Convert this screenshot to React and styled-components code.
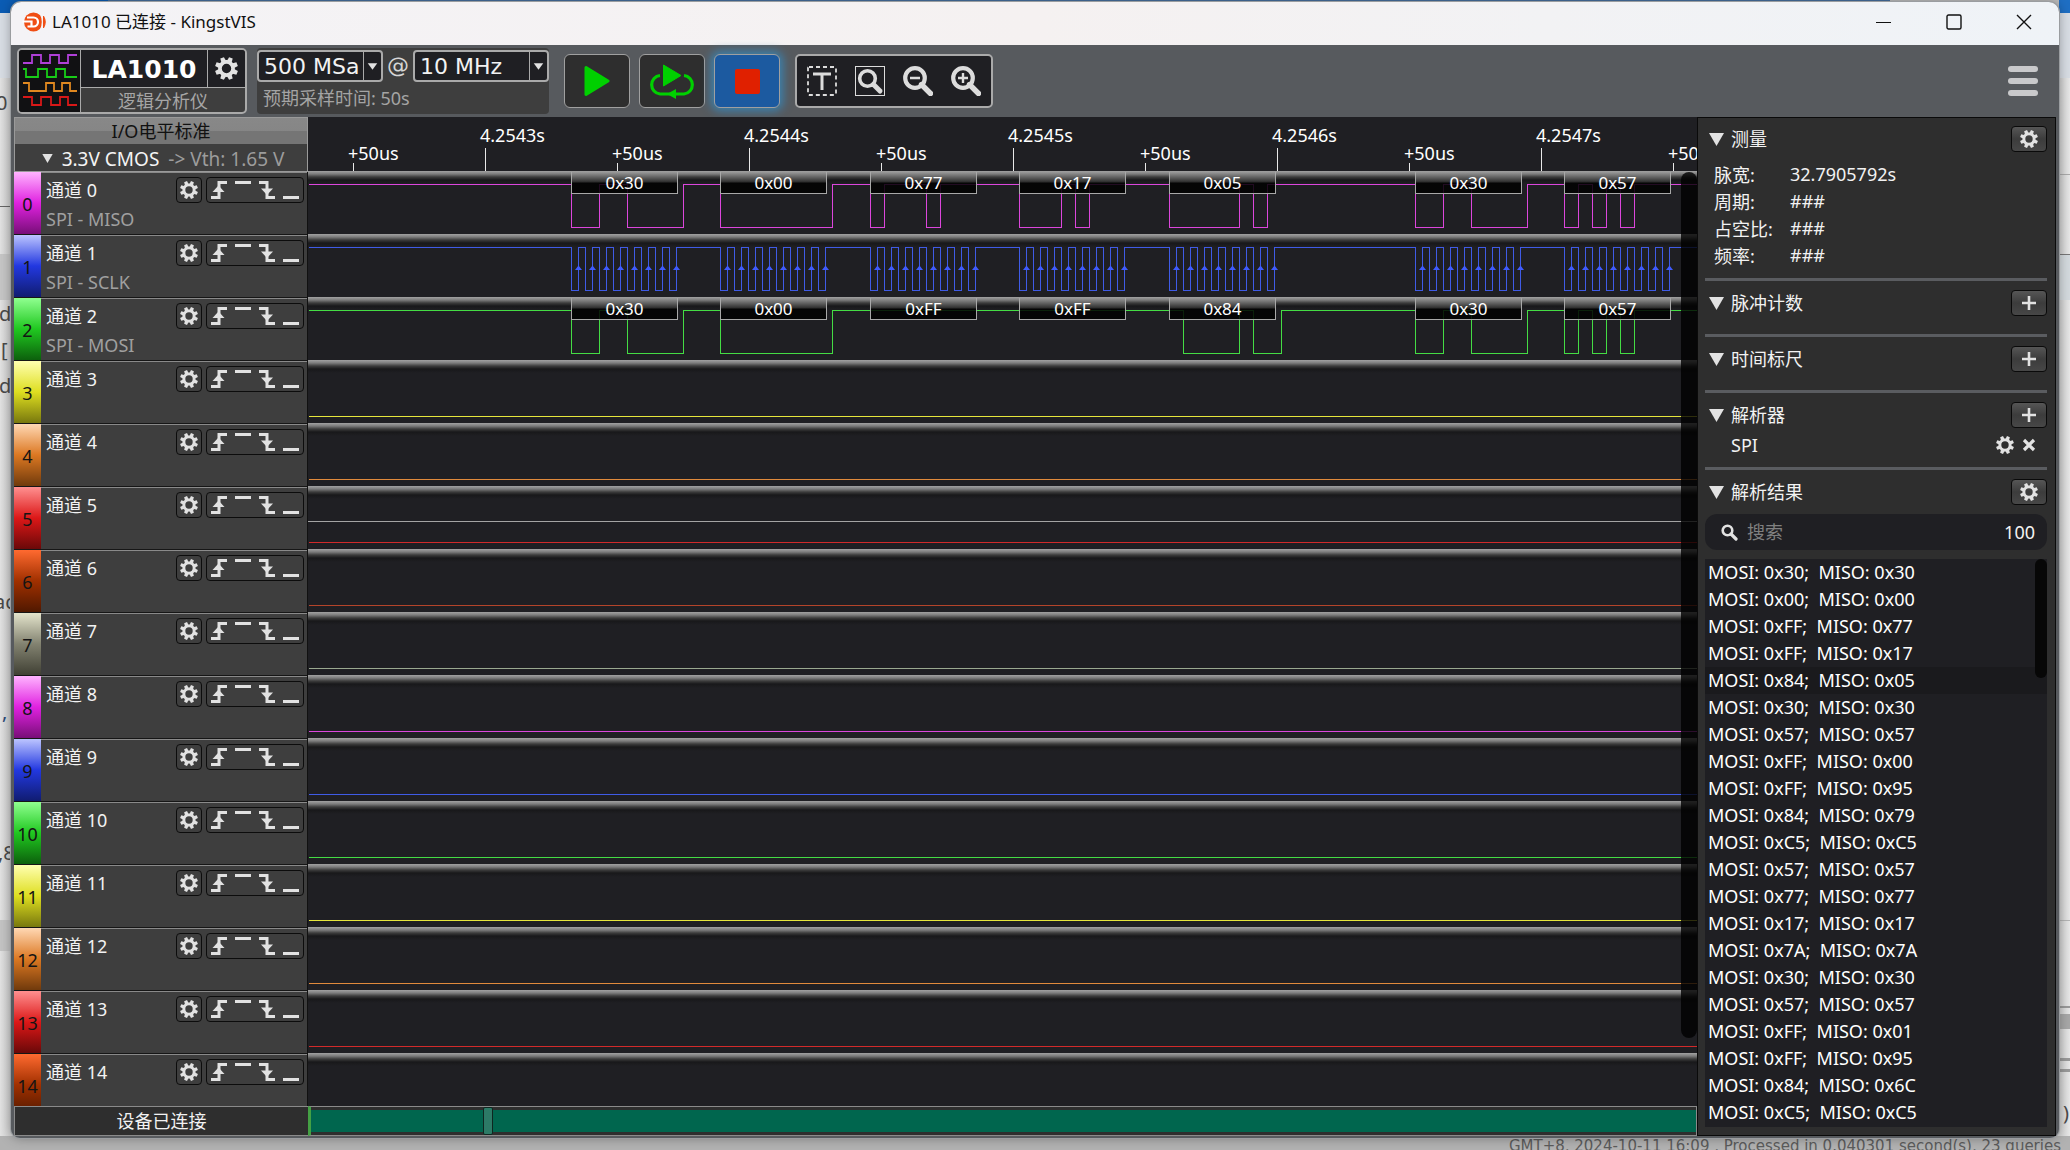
import React, { useState } from 'react';
import styled, { createGlobalStyle } from 'styled-components';

const sans = '"Noto Sans", "Noto Sans CJK SC", sans-serif';
const wide = '"DejaVu Sans", "Noto Sans CJK SC", sans-serif';

const LANE = 63;
const HIGH = 13;
const LOW = 56;
const BIT = 14;

const palette = [
  { top: '#ffb4ff', mid: '#e022e0', end: '#780e78', line: '#dc46dc' },
  { top: '#bcc4ff', mid: '#2238e0', end: '#101c70', line: '#3f5be6' },
  { top: '#90ff90', mid: '#20c820', end: '#0c600c', line: '#44dc44' },
  { top: '#ffffb0', mid: '#dede20', end: '#78780e', line: '#e6e63c' },
  { top: '#ffd8b4', mid: '#dc7822', end: '#703a0c', line: '#e08a3c' },
  { top: '#ff9090', mid: '#dc1818', end: '#6a0808', line: '#d22a2a' },
  { top: '#ff6a30', mid: '#a03000', end: '#501800', line: '#b4442a' },
  { top: '#e4e4cc', mid: '#828270', end: '#404034', line: '#9aa890' },
];

const starts = [263, 412, 562, 711, 861, 1107, 1256];
const miso = [0x30, 0x00, 0x77, 0x17, 0x05, 0x30, 0x57];
const mosi = [0x30, 0x00, 0xff, 0xff, 0x84, 0x30, 0x57];
const hex = (n) => '0x' + n.toString(16).toUpperCase().padStart(2, '0');

const channels = Array.from({ length: 15 }, (_, i) => ({
  id: i,
  note: ['SPI - MISO', 'SPI - SCLK', 'SPI - MOSI'][i],
  bytes: i === 0 ? miso : i === 2 ? mosi : null,
  clock: i === 1,
  color: palette[i % 8],
}));

const ticks = [
  '+50us', '4.2543s', '+50us', '4.2544s', '+50us', '4.2545s',
  '+50us', '4.2546s', '+50us', '4.2547s', '+50us',
];

const results = [
  [0x30, 0x30], [0x00, 0x00], [0xff, 0x77], [0xff, 0x17], [0x84, 0x05],
  [0x30, 0x30], [0x57, 0x57], [0xff, 0x00], [0xff, 0x95], [0x84, 0x79],
  [0xc5, 0xc5], [0x57, 0x57], [0x77, 0x77], [0x17, 0x17], [0x7a, 0x7a],
  [0x30, 0x30], [0x57, 0x57], [0xff, 0x01], [0xff, 0x95], [0x84, 0x6c],
  [0xc5, 0xc5],
];

const GlobalStyle = createGlobalStyle`
  * { box-sizing: border-box; }
  body {
    margin: 0;
    overflow: hidden;
    font-family: ${sans};
    font-size: 18px;
    line-height: 24px;
  }
  button, input, select { font: inherit; color: inherit; }
  button { padding: 0; border: 0; background: none; cursor: pointer; }
  ul, dl, dd, h2 { margin: 0; padding: 0; list-style: none; font-weight: normal; font-size: inherit; }
  svg { display: block; }
`;

const Desktop = styled.div`
  position: relative;
  height: 100vh;
  overflow: hidden;
  background: linear-gradient(90deg, #e2e2e2 0, #cfcfcf 10px, #cfcfcf calc(100% - 11px), #e8e8e8 100%);
`;

const Backdrop = styled.div`
  position: absolute;
  top: ${(p) => p.top}px;
  left: ${(p) => p.left || 'auto'};
  right: ${(p) => p.right || 'auto'};
  width: ${(p) => p.width || 'auto'};
  height: ${(p) => p.height}px;
  background: ${(p) => p.color};
`;

const Fragment = styled.span`
  position: absolute;
  top: ${(p) => p.top}px;
  left: ${(p) => p.left}px;
  color: ${(p) => p.tint || '#4a4a4a'};
  font-size: 20px;
  white-space: nowrap;
`;

const Credits = styled.p`
  position: absolute;
  left: 0;
  right: 0;
  bottom: 0;
  height: 14px;
  margin: 0;
  padding: 0 9px 0 0;
  overflow: hidden;
  background: #b2b2b2;
  color: #5c5c5c;
  font-family: ${wide};
  font-size: 15px;
  line-height: 21px;
  text-align: right;
  white-space: pre;
`;

const Window = styled.main`
  position: relative;
  display: flex;
  flex-direction: column;
  height: calc(100vh - 14px);
  margin: 2px 11px 0;
  border-radius: 10px 10px 9px 9px;
  overflow: hidden;
  background: #575a5e;
  box-shadow: 0 0 0 1px #9a9da0, 0 0 12px rgba(0, 0, 0, 0.35);
`;

const TitleBar = styled.header`
  display: flex;
  align-items: center;
  gap: 6px;
  height: 43px;
  padding: 0 0 3px 11px;
  flex-shrink: 0;
  background: linear-gradient(90deg, #f4f3f6, #f5f1f1 50%, #eff3f7);
  color: #111;
  font-size: 17px;
`;

const WindowButtons = styled.div`
  display: flex;
  margin-left: auto;
  height: 100%;
`;

const WindowButton = styled.button`
  display: grid;
  place-items: center;
  width: 70px;
`;

const Toolbar = styled.div`
  display: flex;
  align-items: center;
  height: 72px;
  padding: 0 21px 0 6px;
  flex-shrink: 0;
`;

const Brand = styled.div`
  display: grid;
  grid-template: 38px 24px / 62px 127px 37px;
  width: 230px;
  height: 66px;
  border: 2px solid #aaa;
  border-radius: 5px;
  background: #3e3e3e;
  overflow: hidden;
`;

const BrandLogo = styled.div`
  display: grid;
  grid-row: 1 / 3;
  place-items: center;
  background: #111113;
  border-right: 1px solid #aaa;
`;

const BrandName = styled.strong`
  background: #1f1f23;
  color: #fff;
  border-right: 1px solid #aaa;
  border-bottom: 1px solid #aaa;
  font: bold 25px/39px ${wide};
  text-align: center;
`;

const BrandGear = styled.button`
  display: grid;
  place-items: center;
  background: #1f1f23;
  border-bottom: 1px solid #aaa;
`;

const BrandKind = styled.span`
  grid-column: 2 / 4;
  color: #a6a6a6;
  line-height: 26px;
  text-align: center;
`;

const Sampling = styled.div`
  width: 292px;
  height: 66px;
  margin: 0 15px 0 10px;
  padding-top: 2px;
  border-radius: 4px;
  background: #3e3e3e;
  color: #a4a4a4;
`;

const SamplingRow = styled.div`
  display: flex;
  align-items: center;
  justify-content: space-between;
  font-family: ${wide};
  font-size: 22px;
  color: #d6d6d6;
`;

const SamplingNote = styled.p`
  margin: 0;
  padding: 4px 6px 0;
`;

const Drop = styled.label`
  position: relative;
  display: block;
  width: ${(p) => p.width}px;
  height: 32px;
  border: 2px solid #aaa;
  border-radius: 4px;
  background: #1f1f23;
  color: #f2f2f2;

  select {
    display: block;
    appearance: none;
    width: 100%;
    height: 100%;
    padding: 1px 0 0 5px;
    border: 0;
    outline: 0;
    background: transparent;
  }

  svg {
    position: absolute;
    top: 0;
    right: 0;
    border-left: 1px solid #aaa;
    pointer-events: none;
  }
`;

const RunButton = styled.button`
  display: grid;
  place-items: center;
  width: 66px;
  height: 54px;
  margin-right: 9px;
  border: 1px solid #a0a0a0;
  border-radius: 6px;
  background: ${(p) => (p.$active ? '#1c5aa0' : '#2e2e2e')};
  box-shadow: ${(p) => (p.$active ? '0 0 10px 3px #3a82b0' : 'none')};
`;

const ToolGroup = styled.div`
  display: flex;
  gap: 18px;
  width: 198px;
  height: 54px;
  margin-left: 6px;
  padding: 10px;
  border: 2px solid #aaa;
  border-radius: 5px;
  background: #1f1f23;
`;

const MenuButton = styled.button`
  display: flex;
  flex-direction: column;
  gap: 6px;
  width: 30px;
  margin-left: auto;

  span {
    height: 6px;
    border-radius: 3px;
    background: #c9c9cb;
  }
`;

const Body = styled.div`
  display: grid;
  grid-template-columns: 294px minmax(0, 1fr) 359px;
  flex: 1;
  min-height: 0;
  padding: 0 3px 2px;
`;

const Column = styled.section`
  display: flex;
  flex-direction: column;
  min-width: 0;
  min-height: 0;
`;

const Levels = styled.div`
  height: 55px;
  flex-shrink: 0;
  border: 1px solid #9a9a9a;
  background: #3e3e3e;
  text-align: center;
`;

const LevelsTitle = styled.div`
  height: 26px;
  background: linear-gradient(#888, #868686 48%, #757575 52%, #757575);
  color: #111;
  line-height: 27px;
`;

const LevelsButton = styled.button`
  display: inline-flex;
  align-items: center;
  gap: 9px;
  height: 26px;
  padding-left: 4px;
  color: #f4f4f4;
  font-size: 19px;

  span { color: #9c9c9c; }
`;

const Rows = styled.div`
  flex: 1;
  min-height: 0;
  overflow: hidden;
  border-right: 1px solid #111;
  background: #3e3e3e;
`;

const Row = styled.div`
  display: flex;
  height: ${LANE}px;
  border-bottom: 1px solid #161616;
`;

const Stripe = styled.div`
  width: 27px;
  padding-top: 4px;
  background: linear-gradient(${(p) => p.$c.top}, ${(p) => p.$c.mid} 50%, ${(p) => p.$c.end});
  color: #141414;
  line-height: 56px;
  text-align: center;
`;

const RowMain = styled.div`
  flex: 1;
  padding: 4px 3px 0 5px;
  border-top: 1px solid #8a8a8a;
`;

const RowHead = styled.div`
  display: flex;
  align-items: center;
  gap: 4px;
  height: 26px;
  color: #f2f2f2;

  > span { margin-right: auto; }
`;

const RowNote = styled.div`
  padding-top: 4px;
  color: #a0a0a0;
`;

const GearBox = styled.button`
  display: grid;
  place-items: center;
  width: 26px;
  height: 26px;
  border: 1px solid #0c0c0c;
  border-radius: 4px;
`;

const TriggerBox = styled.div`
  display: flex;
  gap: 8px;
  width: 98px;
  height: 26px;
  padding: 3px 4px;
  border: 1px solid #0c0c0c;
  border-radius: 4px;
`;

const Status = styled.div`
  height: 30px;
  flex-shrink: 0;
  border: 1px solid #8a8a8a;
  border-right: 0;
  background: #2e2e2e;
  color: #f2f2f2;
  line-height: 29px;
  text-align: center;
`;

const Ruler = styled.div`
  display: flex;
  height: 54px;
  flex-shrink: 0;
  padding-left: 40px;
  overflow: hidden;
  background: #1f1f23;
  color: #fff;
`;

const Tick = styled.div`
  display: flex;
  flex-direction: column;
  justify-content: flex-end;
  width: 132px;
  flex-shrink: 0;
  line-height: 20px;

  &::after {
    content: '';
    width: 1px;
    height: ${(p) => (p.$major ? 23 : 8)}px;
    margin: ${(p) => (p.$major ? 3 : 0)}px 0 0 5px;
    background: #e8e8e8;
  }
`;

const Lanes = styled.div`
  position: relative;
  flex: 1;
  min-height: 0;
  overflow: hidden;
  background: #1f1f23;
`;

const Lane = styled.div`
  position: relative;
  height: ${LANE}px;
  background: linear-gradient(#a2a2a2, #7c7c7c 3px, #3c3c3c 6px, #18181a 9px, #1f1f23 13px);

  svg { width: 100%; height: 100%; }
`;

const Tag = styled.span`
  position: absolute;
  top: 1px;
  left: ${(p) => p.$x}px;
  width: 107px;
  height: 22px;
  border: 1px solid #a8a8a8;
  border-top: 0;
  background: linear-gradient(#9a9a9a, #2c2c2c 48%, rgba(0, 0, 0, 0.85) 52%);
  color: #fff;
  font-size: 17px;
  line-height: 22px;
  text-align: center;
`;

const Cursor = styled.div`
  position: absolute;
  top: 350px;
  left: 0;
  right: 0;
  height: 1px;
  background: #a4a4a4;
`;

const LaneScroll = styled.div`
  position: absolute;
  top: 1px;
  right: 0;
  bottom: 68px;
  width: 16px;
  border-radius: 8px;
  background: rgba(0, 0, 0, 0.8);
`;

const Overview = styled.div`
  position: relative;
  height: 30px;
  flex-shrink: 0;
  border: 1px solid #8a8a8a;
  border-left: 3px solid #44a044;
  background: #00664e;
  box-shadow: inset 0 3px #2e2e2e, inset 0 -3px #2e2e2e;
`;

const Handle = styled.div`
  position: absolute;
  top: 0;
  left: 172px;
  width: 10px;
  height: 28px;
  border: 1px solid #0e2620;
  border-radius: 2px;
  background: #2c7a66;
`;

const Side = styled.aside`
  display: flex;
  flex-direction: column;
  min-height: 0;
  padding: 0 8px 8px 7px;
  border: 1px solid #0a0a0a;
  background: #2e2e2e;
  color: #f2f2f2;
`;

const Section = styled.section`
  display: flex;
  flex-direction: column;
  flex: ${(p) => (p.$fill ? '1' : 'none')};
  min-height: 0;
  padding: 9px 0 ${(p) => p.$bottom}px;
  border-bottom: ${(p) => (p.$fill ? '0' : '3px solid #5a5c60')};

  &:first-child { padding-top: 8px; }
`;

const SectionHead = styled.h2`
  display: flex;
  align-items: center;
  height: 26px;
  padding-left: 4px;
  gap: 7px;

  > button:last-child { margin-left: auto; }
`;

const HeadButton = styled.button`
  display: grid;
  place-items: center;
  width: 36px;
  height: 26px;
  border: 1px solid #0a0a0a;
  border-radius: 4px;
  background: linear-gradient(#565656, #3c3c3c 50%, #474747);
`;

const Measures = styled.dl`
  display: grid;
  grid-template-columns: 76px 1fr;
  grid-auto-rows: 27px;
  padding: 10px 0 0 9px;
  line-height: 27px;

  dd { margin-top: -1px; }
`;

const Analyzer = styled.div`
  display: flex;
  align-items: center;
  gap: 8px;
  height: 34px;
  padding: 0 11px 0 26px;

  span { margin-right: auto; }
`;

const Search = styled.label`
  display: flex;
  align-items: center;
  height: 36px;
  margin: 9px 0;
  padding: 0 12px 0 16px;
  flex-shrink: 0;
  border-radius: 12px;
  background: #1f1f23;

  input {
    flex: 1;
    min-width: 0;
    margin-left: 9px;
    padding: 0;
    border: 0;
    outline: 0;
    background: transparent;
  }

  input::placeholder { color: #808080; opacity: 1; }
`;

const Results = styled.div`
  position: relative;
  flex: 1;
  min-height: 0;
  overflow: hidden;
  background: #1f1f23;
  color: #fff;
`;

const Result = styled.li`
  height: 27px;
  padding-left: 3px;
  line-height: 26px;
  white-space: pre;
  background: ${(p) => (p.$current ? '#1a1a1d' : 'transparent')};
`;

const ResultScroll = styled.div`
  position: absolute;
  top: 0;
  right: 0;
  width: 12px;
  height: 119px;
  border-radius: 6px;
  background: #070707;
`;

function Gear({ size = 18, color = '#e2e2e2' }) {
  return (
    <svg width={size} height={size} viewBox="0 0 20 20">
      <circle cx="10" cy="10" r="5.7" fill="none" stroke={color} strokeWidth="3.2" />
      {[0, 45, 90, 135, 180, 225, 270, 315].map((a) => (
        <path key={a} d="M7.800 4.200 8.300 0h3.400L12.200 4.200z" fill={color} transform={`rotate(${a + 22.5} 10 10)`} />
      ))}
    </svg>
  );
}

function Plus() {
  return (
    <svg width="16" height="16" viewBox="0 0 16 16">
      <path d="M8 1v14M1 8h14" stroke="#e2e2e2" strokeWidth="2.6" />
    </svg>
  );
}

function Arrow({ width = 15, height = 13 }) {
  return (
    <svg width={width} height={height} viewBox="0 0 15 13">
      <path d="M0 0h15L7.5 13z" fill="#e2e2e2" />
    </svg>
  );
}

function Glass({ sign }) {
  return (
    <svg width="30" height="30" viewBox="0 0 30 30">
      <path d="M18.5 18.5 27.5 27.5" stroke="#dcdcdc" strokeWidth="5.4" strokeLinecap="round" />
      <circle cx="12" cy="12" r="9.8" fill="none" stroke="#dcdcdc" strokeWidth="4.2" />
      <path d={sign === 'plus' ? 'M7 12h10M12 7v10' : 'M7 12h10'} stroke="#dcdcdc" strokeWidth="2.4" />
    </svg>
  );
}

const triggers = [
  ['上升沿', 'M0 16.5h8V1.5h8', 'M1.5 11 7.5 4.5 13.500 11z'],
  ['高电平', 'M0 1.500h16', ''],
  ['下降沿', 'M0 1.500h8v15h8', 'M2 7.500h12L8 14z'],
  ['低电平', 'M0 16.500h16', ''],
];

function Trigger({ label, line, head }) {
  return (
    <button aria-label={label}>
      <svg width="16" height="18" viewBox="0 0 16 18">
        <path d={line} fill="none" stroke="#e2e2e2" strokeWidth="3" />
        {head && <path d={head} fill="#e2e2e2" />}
      </svg>
    </button>
  );
}

// each byte is shifted out msb first, the line idles high
function bytePath(bytes) {
  let d = `M0 ${HIGH}`;
  let level = 1;
  bytes.forEach((value, i) => {
    for (let b = 0; b <= 8; b += 1) {
      const bit = b === 8 ? 1 : (value >> (7 - b)) & 1;
      if (bit !== level) {
        d += `H${starts[i] + b * BIT}V${bit ? HIGH : LOW}`;
        level = bit;
      }
    }
  });
  return d + 'H4000';
}

function clockPath() {
  let d = `M0 ${HIGH}`;
  starts.forEach((x) => {
    for (let b = 0; b < 8; b += 1) {
      d += `H${x + b * BIT}V${LOW}H${x + b * BIT + 7}V${HIGH}`;
    }
  });
  return d + 'H4000';
}

function Wave({ channel }) {
  const { bytes, clock, color } = channel;
  let d = `M0 ${LOW}H4000`;
  if (bytes) d = bytePath(bytes);
  if (clock) d = clockPath();

  return (
    <Lane>
      {channel.id < 14 && (
        <svg>
          <path d={d} transform="translate(0.5 0.5)" fill="none" stroke={color.line} strokeWidth="1" shapeRendering="crispEdges" />
          {clock && starts.map((x) => (
            Array.from({ length: 8 }, (_, b) => (
              <path key={x + b} d={`M${x + b * BIT + 4} 36l3.500-4.500 3.500 4.500z`} fill="#3f5bff" />
            ))
          ))}
        </svg>
      )}
      {bytes && bytes.map((value, i) => (
        <Tag key={starts[i]} $x={starts[i]}>{hex(value)}</Tag>
      ))}
    </Lane>
  );
}

function ChannelRow({ channel }) {
  return (
    <Row>
      <Stripe $c={channel.color}>{channel.id}</Stripe>
      <RowMain>
        <RowHead>
          <span>通道 {channel.id}</span>
          <GearBox aria-label={`通道 ${channel.id} 设置`}><Gear /></GearBox>
          <TriggerBox>
            {triggers.map(([label, line, head]) => (
              <Trigger key={label} label={label} line={line} head={head} />
            ))}
          </TriggerBox>
        </RowHead>
        {channel.note && <RowNote>{channel.note}</RowNote>}
      </RowMain>
    </Row>
  );
}

function Head({ title, icon }) {
  return (
    <SectionHead>
      <button aria-label={`折叠${title}`}><Arrow /></button>
      {title}
      <HeadButton aria-label={`${title}选项`}>{icon === 'plus' ? <Plus /> : <Gear />}</HeadButton>
    </SectionHead>
  );
}

function DropDown({ width, label, value }) {
  return (
    <Drop width={width}>
      <select aria-label={label} defaultValue={value}>
        <option>{value}</option>
      </select>
      <svg width="18" height="28" viewBox="0 0 18 28">
        <path d="M4 11h10l-5 7z" fill="#e2e2e2" />
      </svg>
    </Drop>
  );
}

function App() {
  const [query, setQuery] = useState('');

  return (
    <>
      <GlobalStyle />
      <Desktop>
        <Backdrop top={0} left="0" right="0" height={13} color="linear-gradient(90deg, #0b5cb4 108px, #46709f 108px, #46709f calc(100% - 180px), #bdbdbd calc(100% - 180px), #bdbdbd calc(100% - 11px), #1f6fc4 calc(100% - 11px))" />
        <Backdrop top={13} left="0" right="0" height={65} color="#d8dde4" />
        <Backdrop top={206} left="0" width="11px" height={1} color="#666" />
        <Backdrop top={254} left="0" width="11px" height={46} color="#c6c6c6" />
        <Backdrop top={920} left="0" width="11px" height={31} color="#c4c4c4" />
        <Backdrop top={174} right="0" width="11px" height={1} color="#aaa" />
        <Backdrop top={254} right="0" width="11px" height={46} color="#d4dade" />
        <Backdrop top={254} right="0" width="11px" height={1} color="#777" />
        <Backdrop top={920} right="0" width="11px" height={1} color="#b4b4b4" />
        <Backdrop top={1006} right="0" width="11px" height={2} color="#9a9a9a" />
        <Backdrop top={1014} right="0" width="11px" height={15} color="#a8a8a8" />
        <Backdrop top={1058} right="0" width="11px" height={3} color="#9a9a9a" />
        <Backdrop top={1069} right="0" width="11px" height={3} color="#9a9a9a" />
        <Fragment top={91} left={-4}>0</Fragment>
        <Fragment top={302} left={-1}>d</Fragment>
        <Fragment top={338} left={1}>[</Fragment>
        <Fragment top={374} left={-1}>d</Fragment>
        <Fragment top={590} left={-6}>ac</Fragment>
        <Fragment top={700} left={2} tint="#2b4a78">,</Fragment>
        <Fragment top={841} left={-2}>,8</Fragment>
        <Fragment top={1101} left={2063}>)</Fragment>
        <Credits>GMT+8, 2024-10-11 16:09 , Processed in 0.040301 second(s), 23 queries</Credits>

        <Window>
          <TitleBar>
            <svg width="24" height="20" viewBox="0 0 24 20">
              <circle cx="11.500" cy="10" r="9.500" fill="#f04e14" />
              <path d="M0.500 9.500h9v5M5 5.500h6.500a4.500 4.500 0 0 1 0 9H5.500" fill="none" stroke="#fff" strokeWidth="2.200" />
              <path d="M18.500 1q4.500 9 0 18" fill="none" stroke="#f4f3f6" strokeWidth="2" />
              <path d="M21.500 4q3.500 6 0 12z" fill="#f04e14" stroke="#f04e14" />
            </svg>
            LA1010 已连接 - KingstVIS
            <WindowButtons>
              <WindowButton aria-label="最小化">
                <svg width="16" height="16"><path d="M0 8.500h15" stroke="#111" /></svg>
              </WindowButton>
              <WindowButton aria-label="最大化">
                <svg width="16" height="16"><rect x="1" y="1" width="14" height="14" rx="1.500" fill="none" stroke="#111" strokeWidth="1.400" /></svg>
              </WindowButton>
              <WindowButton aria-label="关闭">
                <svg width="16" height="16"><path d="M1 1 15 15M15 1 1 15" stroke="#111" strokeWidth="1.400" /></svg>
              </WindowButton>
            </WindowButtons>
          </TitleBar>

          <Toolbar>
            <Brand>
              <BrandLogo>
                <svg width="54" height="54" viewBox="0 0 54 54" fill="none" strokeWidth="1.800">
                  <path d="M0 9h9V1h9v8h9V1h9v8h9V1h9" stroke="#b040d8" />
                  <path d="M0 15h3v8h12v-8h9v8h9v-8h9v8h12" stroke="#18cc18" />
                  <path d="M0 29h6v8h17v-8h8v8h8v-8h8v8h7" stroke="#e08820" />
                  <path d="M0 43h9v8h9v-8h10v8h9v-8h8v8h9" stroke="#d81818" />
                </svg>
              </BrandLogo>
              <BrandName>LA1010</BrandName>
              <BrandGear aria-label="设备设置"><Gear size={23} /></BrandGear>
              <BrandKind>逻辑分析仪</BrandKind>
            </Brand>

            <Sampling>
              <SamplingRow>
                <DropDown width={126} label="采样深度" value="500 MSa" />
                @
                <DropDown width={136} label="采样率" value="10 MHz" />
              </SamplingRow>
              <SamplingNote>预期采样时间: 50s</SamplingNote>
            </Sampling>

            <RunButton aria-label="开始">
              <svg width="26" height="32" viewBox="0 0 26 32">
                <path d="M2 2.500 24 16 2 29.500z" fill="#00d000" stroke="#00d000" strokeWidth="3" strokeLinejoin="round" />
              </svg>
            </RunButton>
            <RunButton aria-label="循环采样">
              <svg width="44" height="36" viewBox="0 0 44 36">
                <path d="M10 12.500a9.300 9.300 0 0 0 0 18.500h24a9.300 9.300 0 0 0 0-18.500" fill="none" stroke="#00d000" strokeWidth="3.200" />
                <path d="M13.500 2v21L31 12.500z" fill="#00d000" stroke="#00d000" strokeLinejoin="round" />
                <path d="M26 26v10l-9-5z" fill="#00d000" />
              </svg>
            </RunButton>
            <RunButton aria-label="停止" $active>
              <svg width="25" height="25"><rect width="25" height="25" rx="2" fill="#e02000" /></svg>
            </RunButton>

            <ToolGroup>
              <button aria-label="文字标注">
                <svg width="30" height="30" viewBox="0 0 30 30" fill="none" stroke="#dcdcdc">
                  <rect x="1" y="1" width="28" height="28" rx="1" strokeWidth="1.800" strokeDasharray="4 3" />
                  <path d="M6 8h18M15 8v16" strokeWidth="3" />
                </svg>
              </button>
              <button aria-label="适合窗口">
                <svg width="30" height="30" viewBox="0 0 30 30" fill="none" stroke="#dcdcdc">
                  <rect x="0.500" y="0.500" width="29" height="29" />
                  <circle cx="12.500" cy="12.500" r="7.800" strokeWidth="3.600" />
                  <path d="M18.500 18.500 25 25" strokeWidth="5" strokeLinecap="round" />
                </svg>
              </button>
              <button aria-label="缩小"><Glass /></button>
              <button aria-label="放大"><Glass sign="plus" /></button>
            </ToolGroup>

            <MenuButton aria-label="菜单"><span /><span /><span /></MenuButton>
          </Toolbar>

          <Body>
            <Column>
              <Levels>
                <LevelsTitle>I/O电平标准</LevelsTitle>
                <LevelsButton><Arrow width={11} height={9} />3.3V CMOS <span>-&gt; Vth: 1.65 V</span></LevelsButton>
              </Levels>
              <Rows>
                {channels.map((c) => <ChannelRow key={c.id} channel={c} />)}
              </Rows>
              <Status>设备已连接</Status>
            </Column>

            <Column>
              <Ruler>
                {ticks.map((t, i) => <Tick key={i} $major={i % 2 === 1}>{t}</Tick>)}
              </Ruler>
              <Lanes>
                {channels.map((c) => <Wave key={c.id} channel={c} />)}
                <Cursor />
                <LaneScroll />
              </Lanes>
              <Overview><Handle /></Overview>
            </Column>

            <Side>
              <Section $bottom={8}>
                <Head title="测量" />
                <Measures>
                  <dt>脉宽:</dt><dd>32.7905792s</dd>
                  <dt>周期:</dt><dd>###</dd>
                  <dt>占空比:</dt><dd>###</dd>
                  <dt>频率:</dt><dd>###</dd>
                </Measures>
              </Section>
              <Section $bottom={18}><Head title="脉冲计数" icon="plus" /></Section>
              <Section $bottom={18}><Head title="时间标尺" icon="plus" /></Section>
              <Section $bottom={5}>
                <Head title="解析器" icon="plus" />
                <Analyzer>
                  <span>SPI</span>
                  <button aria-label="SPI 设置"><Gear /></button>
                  <button aria-label="移除 SPI">
                    <svg width="14" height="14"><path d="M2 2 12 12M12 2 2 12" stroke="#e2e2e2" strokeWidth="3.200" /></svg>
                  </button>
                </Analyzer>
              </Section>
              <Section $fill $bottom={0}>
                <Head title="解析结果" />
                <Search>
                  <svg width="17" height="17" viewBox="0 0 17 17" fill="none" stroke="#e2e2e2" strokeWidth="2.600">
                    <circle cx="6.500" cy="6.500" r="4.800" />
                    <path d="M10 10 15 15" strokeWidth="3.200" strokeLinecap="round" />
                  </svg>
                  <input aria-label="搜索" placeholder="搜索" value={query} onChange={(e) => setQuery(e.target.value)} />
                  100
                </Search>
                <Results>
                  <ul>
                    {results.map(([a, b], i) => (
                      <Result key={i} $current={i === 4}>{`MOSI: ${hex(a)};  MISO: ${hex(b)}`}</Result>
                    ))}
                  </ul>
                  <ResultScroll />
                </Results>
              </Section>
            </Side>
          </Body>
        </Window>
      </Desktop>
    </>
  );
}

export default App;
